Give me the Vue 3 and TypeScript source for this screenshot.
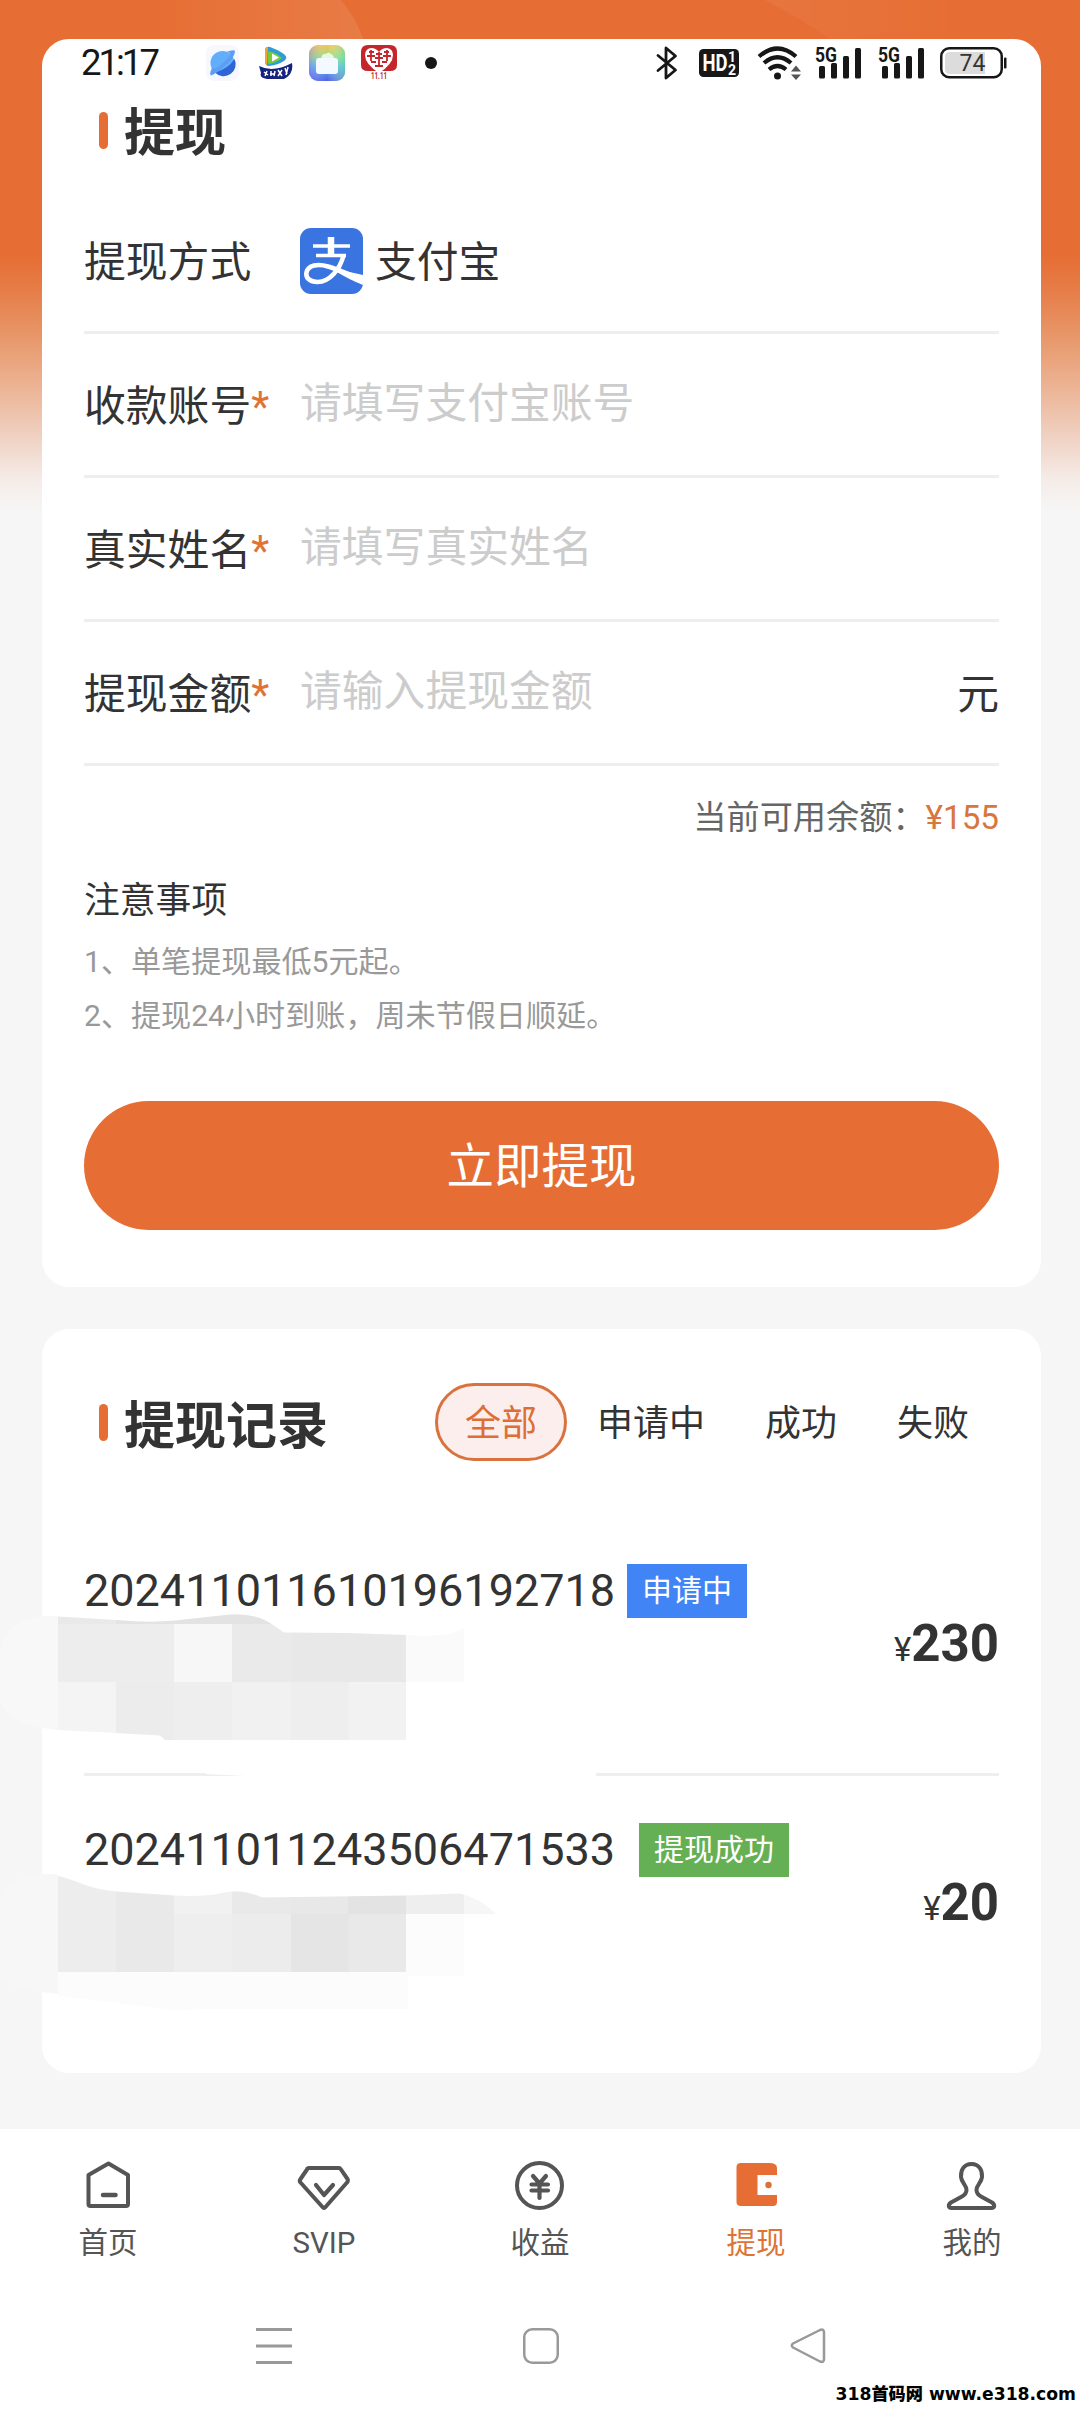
<script setup lang="ts">
interface Field {
  label: string
  placeholder: string
  unit?: string
}

interface WithdrawRecord {
  id: string
  status: string
  kind: 'pending' | 'success'
  amount: number
}

const fields: Field[] = [
  { label: '收款账号', placeholder: '请填写支付宝账号' },
  { label: '真实姓名', placeholder: '请填写真实姓名' },
  { label: '提现金额', placeholder: '请输入提现金额', unit: '元' },
]

const filters: string[] = ['全部', '申请中', '成功', '失败']

const records: WithdrawRecord[] = [
  { id: '202411011610196192718', status: '申请中', kind: 'pending', amount: 230 },
  { id: '202411011243506471533', status: '提现成功', kind: 'success', amount: 20 },
]

const tabs: string[] = ['首页', 'SVIP', '收益', '提现', '我的']
</script>

<template>
  <div class="page">
    <svg class="glow" width="1080" height="39" viewBox="0 0 1080 39">
      <defs>
        <linearGradient id="glowA" x1="0" x2="1" y1="0" y2="0">
          <stop offset="0" stop-color="#fff" stop-opacity="0" />
          <stop offset="1" stop-color="#fff" stop-opacity=".09" />
        </linearGradient>
        <linearGradient id="glowB" x1="0" x2="1" y1="0" y2="0">
          <stop offset="0" stop-color="#fff" stop-opacity=".05" />
          <stop offset="1" stop-color="#fff" stop-opacity="0" />
        </linearGradient>
      </defs>
      <path d="M150 0H341Q356 18 363 39H150Z" fill="url(#glowA)" />
      <path d="M765 0H960V39H830Q800 18 765 0Z" fill="url(#glowB)" />
    </svg>

    <header class="status">
      <span class="clock">21:17</span>
      <svg class="planet" width="33" height="36" viewBox="0 0 33 36">
        <rect width="33" height="36" rx="8" fill="#f6f8fd" />
        <circle cx="16.500" cy="18" r="12" fill="#63aefb" />
        <path d="M28.500 14A12 12 0 0 1 9 27.500Q22 24 28.500 14Z" fill="#2f66d6" />
        <path d="M20 7Q28 4 29 6Q29 12 20 20Q10 29 5 30.500Q3 29 6 23Q10 25 18 17Q25 11 24 8Z" fill="#5a9ef6" />
      </svg>
      <svg class="play" width="34" height="34" viewBox="0 0 34 34">
        <path d="M6 5Q6 0 11 1Q20 4 26 9Q29 12 25 15Q19 19 10 20Q6 20 6 15Z" fill="#2e9cd8" />
        <path d="M9 3Q8 9 8 19Q6 19 6 15V5Q6 1 9 1Z" fill="#f0a52c" />
        <path d="M9.500 5Q18 7 23 12Q17 17 9.500 18Q7.500 11 9.500 5Z" fill="#74c93c" />
        <path d="M13 7.500L20 11.500L13 15.500Z" fill="#fff" />
        <path d="M0 20Q14 27 33 17Q35 28 25 33H8Q0 32 2 27Z" fill="#17247e" />
        <path d="M5 26l4 3M8 25l-2 5M12 25v5M11 28h5M16 25l-1 5M19 24l4 6M23 24l-4 6M26 22l2 6M29 21l-2 8" stroke="#fff" stroke-width="1.500" fill="none" />
      </svg>
      <svg class="files" width="36" height="36" viewBox="0 0 36 36">
        <defs>
          <linearGradient id="filesA" x1="0" y1="0" x2="0" y2="1">
            <stop offset="0" stop-color="#f6c44c" />
            <stop offset=".35" stop-color="#8fdc8a" />
            <stop offset=".6" stop-color="#4fb4ee" />
            <stop offset="1" stop-color="#4f5fe6" />
          </linearGradient>
          <linearGradient id="filesB" x1="0" y1="0" x2="1" y2="0">
            <stop offset="0" stop-color="#a06cf0" stop-opacity=".4" />
            <stop offset=".5" stop-color="#fff" stop-opacity="0" />
            <stop offset="1" stop-color="#62dba0" stop-opacity=".6" />
          </linearGradient>
        </defs>
        <rect width="36" height="36" rx="9" fill="url(#filesA)" />
        <rect width="36" height="36" rx="9" fill="url(#filesB)" />
        <path d="M12 14Q13 8 17 9Q19 6 22 9Q25 10 25 14Z" fill="#e9f9e0" />
        <rect x="7" y="13" width="22" height="16" rx="3" fill="#f2faff" />
      </svg>
      <svg class="heart" width="36" height="36" viewBox="0 0 36 36">
        <path d="M7 0H29Q36 0 36 7V20Q36 26 29 26H7Q0 26 0 20V7Q0 0 7 0Z" fill="#c4262b" />
        <path d="M18 28Q4 19 4 10Q4 4 10 3Q15 3 18 7Q21 3 26 3Q32 4 32 10Q32 19 18 28Z" fill="#fff" />
        <path d="M8 7h5M6 11h8M10 5v11M23 7h5M22 11h8M26 5v11M15 9h6M14 13h8M18 7v14M10 17h5M21 17h5M14 21h8" stroke="#c4262b" stroke-width="1.800" />
        <text x="18" y="34" text-anchor="middle" font-size="9" font-weight="700" fill="#c4262b" textLength="16" lengthAdjust="spacingAndGlyphs">11.11</text>
      </svg>
      <i class="more"></i>

      <svg class="bt" width="22" height="34" viewBox="0 0 22 34">
        <path d="M2 9.500L19.500 24L10 32V2L19.500 10L2 24.500" fill="none" stroke="#171717" stroke-width="2.800" stroke-linejoin="round" stroke-linecap="round" />
      </svg>
      <svg class="hd" width="40" height="28" viewBox="0 0 40 28">
        <rect width="40" height="28" rx="4.500" fill="#171717" />
        <text x="3.500" y="22" font-size="23" font-weight="700" fill="#fff" textLength="25" lengthAdjust="spacingAndGlyphs">HD</text>
        <text x="29" y="13" font-size="14" font-weight="700" fill="#fff">1</text>
        <text x="29" y="25.500" font-size="14" font-weight="700" fill="#fff">2</text>
      </svg>
      <svg class="wifi" width="46" height="34" viewBox="0 0 46 34">
        <g fill="none" stroke="#171717" stroke-width="4.200">
          <path d="M2 10.500Q20.500 -5.500 39 10.500" />
          <path d="M7 17Q20.500 5.500 34 17" />
          <path d="M12 23.500Q20.500 16.500 29 23.500" />
        </g>
        <circle cx="20.500" cy="30" r="3.500" fill="#171717" />
        <path d="M34 25.500L39 19.500L44 25.500ZM34 28.500L39 34L44 28.500Z" fill="#555" />
      </svg>
      <svg v-for="n in 2" :key="n" class="signal" width="47" height="37" viewBox="0 0 47 37">
        <text x="0" y="17.500" font-size="21" font-weight="700" fill="#171717" textLength="22" lengthAdjust="spacingAndGlyphs">5G</text>
        <g fill="#171717">
          <rect x="4" y="22" width="6" height="12.500" rx="1.500" />
          <rect x="16" y="19" width="6" height="15.500" rx="1.500" />
          <rect x="28" y="12" width="6" height="22.500" rx="1.500" />
          <rect x="40" y="4" width="6" height="30.500" rx="1.500" />
        </g>
      </svg>
      <svg class="battery" width="68" height="32" viewBox="0 0 68 32">
        <rect x="1.250" y="1.250" width="60.500" height="29" rx="8" fill="#fff" stroke="#171717" stroke-width="2.500" />
        <path d="M10 5H45V27H10Q5 27 5 22V10Q5 5 10 5Z" fill="#dcdcdc" />
        <rect x="64" y="10.500" width="2.500" height="11" rx="1" fill="#171717" />
        <text x="32.500" y="24" text-anchor="middle" font-size="23" fill="#333">74</text>
      </svg>
    </header>

    <section class="card form">
      <h2 class="title"><i class="bar"></i>提现</h2>

      <div class="row">
        <span class="label">提现方式</span>
        <svg class="alipay" width="63" height="66" viewBox="0 0 63 66">
          <rect width="63" height="66" rx="11" fill="#3974e0" />
          <g fill="none" stroke="#fff">
            <path d="M31 9V27" stroke-width="6.500" />
            <path d="M13 18H50M16 27.500H46" stroke-width="3.600" />
            <path d="M43.500 27.500C40 41 30 54 17.500 54C10 54 5.500 50 6.500 44.500C8 37 18 35.500 28 38.500C40 42 50 47.500 63 51.500" stroke-width="4.600" />
          </g>
          <path d="M37 40.500Q50 44.500 63 47V57Q48 51 37 44Z" fill="#fff" />
        </svg>
        <span class="method">支付宝</span>
      </div>

      <div v-for="f in fields" :key="f.label" class="row">
        <span class="label low">{{ f.label }}<em>*</em></span>
        <span class="placeholder">{{ f.placeholder }}</span>
        <span v-if="f.unit" class="unit">{{ f.unit }}</span>
      </div>

      <p class="balance">当前可用余额：<b>¥155</b></p>

      <div class="notes">
        <h3>注意事项</h3>
        <p>1、单笔提现最低5元起。</p>
        <p>2、提现24小时到账，周未节假日顺延。</p>
      </div>

      <button class="submit" type="button">立即提现</button>
    </section>

    <section class="card history">
      <div class="history-head">
        <h2 class="title"><i class="bar"></i>提现记录</h2>
        <nav class="filters">
          <span v-for="(f, i) in filters" :key="f" class="filter" :class="{ active: i === 0 }">{{ f }}</span>
        </nav>
      </div>

      <article v-for="r in records" :key="r.id" class="record" :class="r.kind">
        <div class="record-top">
          <span class="id">{{ r.id }}</span>
          <span class="tag">{{ r.status }}</span>
        </div>
        <div class="amount"><small>¥</small>{{ r.amount }}</div>
      </article>

      <!-- Pixelated cover strokes over the account details; origin is page point (0, 1600) -->
      <svg class="mosaic" width="600" height="430" viewBox="0 1600 600 430">
        <defs>
          <clipPath id="coverA">
            <path d="M58 1616.500L116 1620Q150 1623 175 1620.500L225 1615Q256 1611 276 1627L284 1632.500L348 1633L406 1635Q450 1638 464 1628V1682H406V1740H165L160 1735.500L116 1733L58 1730Z" />
          </clipPath>
          <clipPath id="coverB">
            <path d="M58 1876Q68 1878 85 1885Q100 1890 116 1891.500L174 1895.500Q205 1897 222 1893Q242 1888 262 1897.500L406 1895.500L460 1893.500Q480 1898 496 1914H464V1976H408V2009H200L174 2011Q130 2004 58 1996Z" />
          </clipPath>
        </defs>
        <path d="M42 1616Q6 1620 0 1650V1700Q6 1723 42 1728L58 1730V1616Z" fill="#f8f8f8" />
        <g clip-path="url(#coverA)" shape-rendering="crispEdges">
          <rect x="58" y="1610" width="58" height="14" fill="#e9e9e9" />
          <rect x="116" y="1610" width="168" height="14" fill="#e3e3e3" />
          <rect x="58" y="1624" width="116" height="58" fill="#ededed" />
          <rect x="174" y="1624" width="58" height="58" fill="#f7f7f7" />
          <rect x="232" y="1624" width="60" height="58" fill="#eaeaea" />
          <rect x="292" y="1624" width="114" height="58" fill="#e8e8e8" />
          <rect x="406" y="1624" width="58" height="58" fill="#fafafa" />
          <rect x="58" y="1682" width="58" height="58" fill="#f4f4f4" />
          <rect x="116" y="1682" width="58" height="58" fill="#ececec" />
          <rect x="174" y="1682" width="58" height="58" fill="#eeeeee" />
          <rect x="232" y="1682" width="59" height="58" fill="#f1f1f1" />
          <rect x="291" y="1682" width="58" height="58" fill="#eeeeee" />
          <rect x="349" y="1682" width="57" height="58" fill="#f2f2f2" />
        </g>
        <path d="M206 1771H596V1778H290L206 1774Z" fill="#fff" />
        <path d="M42 1874Q8 1878 0 1896V1976Q14 1990 42 1992L58 1994V1874Z" fill="#f7f7f7" />
        <g clip-path="url(#coverB)" shape-rendering="crispEdges">
          <rect x="58" y="1870" width="58" height="102" fill="#ededed" />
          <rect x="116" y="1870" width="58" height="102" fill="#e9e9e9" />
          <rect x="174" y="1880" width="58" height="34" fill="#f1f1f1" />
          <rect x="232" y="1880" width="59" height="34" fill="#e9e9e9" />
          <rect x="291" y="1880" width="57" height="34" fill="#e8e8e8" />
          <rect x="348" y="1880" width="58" height="34" fill="#e3e3e3" />
          <rect x="406" y="1880" width="58" height="34" fill="#eeeeee" />
          <rect x="464" y="1880" width="40" height="34" fill="#f6f6f6" />
          <rect x="174" y="1914" width="58" height="58" fill="#eeeeee" />
          <rect x="232" y="1914" width="59" height="58" fill="#ececec" />
          <rect x="291" y="1914" width="58" height="58" fill="#e5e5e5" />
          <rect x="349" y="1914" width="57" height="58" fill="#e9e9e9" />
          <rect x="406" y="1914" width="58" height="62" fill="#fcfcfc" />
          <rect x="58" y="1972" width="350" height="40" fill="#fcfcfc" />
        </g>
      </svg>
    </section>

    <footer class="dock">
      <nav class="tabs">
        <div v-for="(t, i) in tabs" :key="t" class="tab" :class="{ current: i === 3 }">
          <svg width="56" height="56" viewBox="0 0 56 56" fill="none" stroke="#555" stroke-width="4" stroke-linejoin="round" stroke-linecap="round">
            <template v-if="i === 0">
              <path d="M28.500 7.500L48 19V48Q48 50 46 50H10.500Q8.500 50 8.500 48V19Z" />
              <path d="M23 39H35.500" stroke-width="4.500" />
            </template>
            <template v-else-if="i === 1">
              <path d="M13 12H43Q44 12 45 13.500L51.500 23Q52.500 25 51 26.500L29.500 51Q28 53 26.500 51L4.500 26.500Q3 25 4.500 23L11 13.500Q11.500 12 13 12Z" />
              <path d="M20 29L28 39L37 29" stroke-width="4.200" />
            </template>
            <template v-else-if="i === 2">
              <circle cx="27.500" cy="29.500" r="22.500" />
              <path d="M21 20L27.500 27.500L34 20M19.500 28.500H36M19.500 34.500H36M27.500 28V42" stroke-width="4.200" />
            </template>
            <template v-else-if="i === 3">
              <path d="M13 7H41Q49 7 49 12V19H29.500V39H49V46Q49 50 45 50H13Q8.500 50 8.500 46V11Q8.500 7 13 7Z" fill="#e66e34" stroke="none" />
              <circle cx="40.500" cy="29" r="3.200" fill="#dd6f3a" stroke="none" />
            </template>
            <template v-else>
              <path d="M27.500 8C20 8 16.500 14 17 21C17.500 27 22.500 29 22.500 34Q22.500 38 18 40.500L7 46.500C3.500 49 4.500 52 7.500 52H47.500C50.500 52 51.500 49 48 46.500L37 40.500Q32.500 38 32.500 34C32.500 29 37.500 27 38 21C38.500 14 35 8 27.500 8Z" stroke-width="4" />
            </template>
          </svg>
          <span>{{ t }}</span>
        </div>
      </nav>
      <div class="keys">
        <svg width="36" height="36" viewBox="0 0 36 36" stroke="#999" stroke-width="3">
          <path d="M0 1.500H36M0 18H36M0 34.500H36" />
        </svg>
        <svg width="36" height="36" viewBox="0 0 36 36" fill="none" stroke="#999" stroke-width="2.500">
          <rect x="1.250" y="1.250" width="33.500" height="33.500" rx="8" />
        </svg>
        <svg width="36" height="36" viewBox="0 0 36 36" fill="none" stroke="#999" stroke-width="2.500" stroke-linejoin="round">
          <path d="M30 2L3 15.500Q0.500 17.500 3 19.500L30 33.500Q34 35 34 31V4.500Q34 0.500 30 2Z" />
        </svg>
      </div>
      <p class="watermark">318<span>首码网</span> www.e318.com</p>
    </footer>
  </div>
</template>

<style>
body {
  background: #f6f6f6;
}
</style>

<style scoped>
.page {
  position: relative;
  box-sizing: border-box;
  width: 1080px;
  height: 2412px;
  padding-top: 39px;
  overflow: hidden;
  display: flex;
  flex-direction: column;
  font-family: Roboto, "Noto Sans CJK SC", sans-serif;
  color: #333;
  background: linear-gradient(
    #e66e34 0,
    #e66e34 255px,
    #e67d48 290px,
    #e8996c 340px,
    #ecb597 390px,
    #f0d3c5 440px,
    #f5ece8 480px,
    #f6f6f6 512px
  );
}

h2,
h3,
p {
  margin: 0;
}

svg {
  display: block;
  flex: none;
}

.glow {
  position: absolute;
  top: 0;
  left: 0;
}

.status {
  position: absolute;
  top: 44px;
  left: 81px;
  width: 927px;
  height: 37px;
  display: flex;
  align-items: center;
  z-index: 2;
}

.clock {
  width: 125px;
  font-size: 36.5px;
  line-height: 37px;
  letter-spacing: -3px;
  color: #171717;
}

.play {
  margin-left: 20px;
}

.files {
  margin-left: 16px;
}

.heart {
  margin-left: 16px;
}

.more {
  width: 12px;
  height: 12px;
  margin-left: 28px;
  border-radius: 50%;
  background: #171717;
}

.bt {
  margin-left: auto;
}

.hd {
  margin-left: 21px;
}

.wifi {
  margin-left: 18px;
}

.signal {
  margin-left: 12px;
}

.signal + .signal {
  margin-left: 16px;
}

.battery {
  margin-left: 15px;
}

.card {
  box-sizing: border-box;
  margin: 0 39px 0 42px;
  padding: 0 42px;
  background: #fff;
  border-radius: 27px;
}

.form {
  height: 1248px;
  padding-top: 64px;
}

.title {
  display: flex;
  align-items: center;
  height: 62px;
  padding-left: 15px;
  font-size: 51px;
  line-height: 62px;
  font-weight: 700;
  white-space: nowrap;
}

.bar {
  width: 9px;
  height: 37px;
  margin: -8px 16px 0 0;
  border-radius: 5px;
  background: #e66e34;
}

.row {
  box-sizing: border-box;
  display: flex;
  align-items: center;
  height: 144px;
  border-bottom: 3px solid #eee;
  font-size: 41.8px;
  line-height: 60px;
}

.title + .row {
  margin-top: 25px;
}

.label {
  width: 216px;
  padding-top: 5px;
  white-space: nowrap;
}

.label em {
  font-style: normal;
  color: #dd7436;
}

.method {
  margin-left: 12px;
  padding-top: 5px;
}

.placeholder {
  margin-top: -2px;
  color: #ccc;
}

.unit {
  margin-left: auto;
  padding-top: 5px;
}

.balance {
  margin-top: 27px;
  text-align: right;
  font-size: 33.2px;
  line-height: 50px;
  color: #666;
}

.balance b {
  font-weight: 400;
  color: #d8763c;
}

.notes {
  margin-top: 33px;
  font-size: 30.1px;
  color: #999;
}

.notes h3 {
  margin-bottom: 9px;
  font-size: 35.8px;
  line-height: 50px;
  font-weight: 400;
  color: #333;
}

.notes p {
  line-height: 54px;
}

.submit {
  display: block;
  width: 915px;
  height: 129px;
  margin-top: 58px;
  padding: 3px 0 0;
  border: 0;
  border-radius: 65px;
  background: #e66e34;
  color: #fff;
  font: 400 47.5px/126px Roboto, "Noto Sans CJK SC", sans-serif;
}

.history {
  position: relative;
  height: 744px;
  margin-top: 42px;
  padding-top: 54px;
}

.history-head {
  display: flex;
  justify-content: space-between;
  align-items: center;
  height: 78px;
}

.history-head .title {
  margin-top: 9px;
}

.filters {
  display: flex;
}

.filter {
  box-sizing: border-box;
  height: 78px;
  padding: 0 30px;
  font-size: 36px;
  line-height: 83px;
}

.filter.active {
  padding: 0 27px;
  border: 3px solid #d8723e;
  border-radius: 39px;
  line-height: 77px;
  color: #dd6f36;
  background: #fbeeec;
}

.record {
  box-sizing: border-box;
  height: 259px;
}

.record.pending {
  height: 215px;
  margin-top: 100px;
  border-bottom: 3px solid #eee;
}

.record.success {
  padding-top: 44px;
}

.record-top {
  display: flex;
  align-items: center;
  height: 60px;
}

.id {
  font-size: 45px;
  line-height: 60px;
}

.tag {
  height: 54px;
  margin-left: 12px;
  padding: 0 15px;
  font-size: 30px;
  line-height: 54px;
  color: #fff;
  background: #4084f6;
}

.success .tag {
  margin-left: 24px;
  background: #65b054;
}

.amount {
  text-align: right;
  font-size: 51px;
  line-height: 60px;
  font-weight: 700;
  margin-top: -7px;
}

.amount small {
  font-size: 33px;
  font-weight: 400;
}

.mosaic {
  position: absolute;
  left: -42px;
  top: 271px;
}

.dock {
  display: flex;
  flex-direction: column;
  height: 283px;
  margin-top: 56px;
  background: #fff;
}

.tabs {
  display: flex;
  padding-top: 27px;
}

.tab {
  flex: 1;
  display: flex;
  flex-direction: column;
  align-items: center;
  font-size: 29.5px;
  line-height: 40px;
  color: #555;
}

.tab span {
  margin-top: 11px;
}

.tab.current {
  color: #dd7436;
}

.keys {
  display: flex;
  gap: 231px;
  margin-top: 65px;
  padding-left: 256px;
}

.watermark {
  margin: 18px 4px 0 0;
  text-align: right;
  font: 700 17.2px/24px "DejaVu Sans", "Noto Sans CJK SC", sans-serif;
  color: #000;
}

.watermark span {
  font-weight: 900;
}
</style>
